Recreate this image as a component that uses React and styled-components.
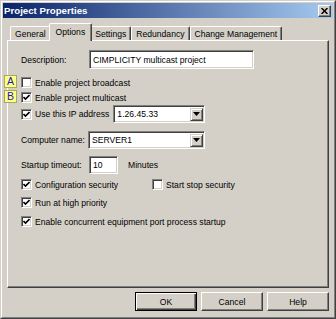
import React from 'react';
import styled, { createGlobalStyle } from 'styled-components';

const Global = createGlobalStyle`
  html, body { margin: 0; padding: 0; background: #D4D0C8; }
  body { font-family: "Liberation Sans", Arial, sans-serif; font-size: 8.6px; color: #000; }
  * { box-sizing: border-box; }
`;

const Window = styled.div`
  width: 336px;
  height: 319px;
  background: #D4D0C8;
  border: 1px solid;
  border-color: #D4D0C8 #404040 #404040 #D4D0C8;
  display: flex;
  flex-direction: column;
`;

const Frame = styled.div`
  flex: 1;
  display: flex;
  flex-direction: column;
  border: 1px solid;
  border-color: #fff #808080 #808080 #fff;
  padding: 1px;
`;

const TitleBar = styled.div`
  height: 15px;
  display: flex;
  align-items: center;
  justify-content: space-between;
  padding: 0 2px 0 1px;
  background: linear-gradient(to right, #0A246A, #A6CAF0);
`;

const Title = styled.span`
  color: #fff;
  font-weight: bold;
  font-size: 9.7px;
`;

const CloseBtn = styled.div`
  width: 13px;
  height: 12px;
  background: #D4D0C8;
  border: 1px solid;
  border-color: #fff #404040 #404040 #fff;
  box-shadow: inset -1px -1px #808080;
  display: flex;
  align-items: center;
  justify-content: center;
`;

const Body = styled.div`
  flex: 1;
  display: flex;
  flex-direction: column;
  padding: 5px 4px 0 4px;
`;

const TabRow = styled.div`
  display: flex;
  align-items: flex-end;
  height: 17px;
  padding-left: 3px;
  position: relative;
  z-index: 2;
`;

const Tab = styled.div`
  height: ${p => (p.$active ? 18 : 14)}px;
  margin: ${p => (p.$active ? '0 -2px -1px -2px' : '0 0 0 0')};
  padding: 0 ${p => (p.$active ? 6 : 4)}px;
  display: flex;
  align-items: center;
  padding-bottom: ${p => (p.$active ? 2 : 0)}px;
  background: #D4D0C8;
  border-top: 1px solid #fff;
  border-left: 1px solid #fff;
  border-right: 1px solid #404040;
  box-shadow: inset -1px 0 #808080;
  border-radius: 2px 2px 0 0;
  position: relative;
  z-index: ${p => (p.$active ? 3 : 1)};
  white-space: nowrap;
`;

const Panel = styled.div`
  height: 248px;
  border: 1px solid;
  border-color: #fff #404040 #404040 #fff;
  box-shadow: inset -1px -1px #808080;
  padding: 9px 0 0 13px;
  display: flex;
  flex-direction: column;
  position: relative;
  z-index: 1;
`;

const Row = styled.div`
  display: flex;
  align-items: center;
  height: ${p => p.$h}px;
  margin-top: ${p => p.$mt || 0}px;
  position: relative;
`;

const Label = styled.span`
  width: ${p => (p.$w ? `${p.$w}px` : 'auto')};
  margin-left: ${p => p.$ml || 0}px;
  white-space: nowrap;
  flex: none;
`;

const Field = styled.div`
  width: ${p => p.$w}px;
  height: 18px;
  background: #fff;
  border: 1px solid;
  border-color: #808080 #fff #fff #808080;
  box-shadow: inset 1px 1px #404040, inset -1px -1px #D4D0C8;
  display: flex;
  align-items: center;
  padding: 0 2px 0 3px;
  margin-left: ${p => p.$ml || 0}px;
  flex: none;
  white-space: nowrap;
  overflow: hidden;
`;

const FieldText = styled.span`
  flex: 1;
`;

const DropBtn = styled.div`
  width: 13px;
  height: 13px;
  margin-right: -1px;
  background: #D4D0C8;
  border: 1px solid;
  border-color: #D4D0C8 #404040 #404040 #D4D0C8;
  box-shadow: inset 1px 1px #fff, inset -1px -1px #808080;
  display: flex;
  align-items: center;
  justify-content: center;
  flex: none;
`;

const Box = styled.div`
  width: 11px;
  height: 11px;
  background: #fff;
  border: 1px solid;
  border-color: #808080 #fff #fff #808080;
  box-shadow: inset 1px 1px #404040, inset -1px -1px #D4D0C8;
  display: flex;
  align-items: center;
  justify-content: center;
  flex: none;
  margin-right: 3px;
`;

const Check = styled.label`
  display: flex;
  align-items: center;
  width: ${p => (p.$w ? `${p.$w}px` : 'auto')};
  white-space: nowrap;
  flex: none;
`;

const Badge = styled.div`
  position: absolute;
  left: -17px;
  top: 0;
  width: 13px;
  height: 13px;
  background: #FFFF80;
  border: 1px solid #A8A860;
  color: #1A1AC8;
  font-size: 10.5px;
  line-height: 11px;
  text-align: center;
`;

const ButtonRow = styled.div`
  display: flex;
  justify-content: flex-end;
  gap: 4px;
  margin-top: 4px;
`;

const Button = styled.div`
  width: 62px;
  height: 19px;
  display: flex;
  align-items: center;
  justify-content: center;
  background: #D4D0C8;
  border: 1px solid;
  border-color: ${p => (p.$default ? '#000' : '#fff #404040 #404040 #fff')};
  box-shadow: ${p =>
    p.$default
      ? 'inset 1px 1px #fff, inset -1px -1px #404040, inset -2px -2px #808080'
      : 'inset -1px -1px #808080'};
`;

const CheckMark = () => (
  <svg width="7" height="7" viewBox="0 0 7 7">
    <path d="M0.5 3 L2.5 5 L6.5 1" stroke="#000" strokeWidth="1.6" fill="none" />
  </svg>
);

const CheckBox = ({ checked, children, w }) => (
  <Check $w={w}>
    <Box>{checked && <CheckMark />}</Box>
    {children}
  </Check>
);

const Arrow = () => (
  <svg width="7" height="4" viewBox="0 0 7 4">
    <path d="M0 0 H7 L3.5 4 Z" fill="#000" />
  </svg>
);

const Combo = ({ w, ml, value }) => (
  <Field $w={w} $ml={ml}>
    <FieldText>{value}</FieldText>
    <DropBtn>
      <Arrow />
    </DropBtn>
  </Field>
);

export default function App() {
  return (
    <>
      <Global />
      <Window>
        <Frame>
          <TitleBar>
            <Title>Project Properties</Title>
            <CloseBtn>
              <svg width="7" height="6" viewBox="0 0 7 6">
                <path d="M0.5 0 L6.5 6 M6.5 0 L0.5 6" stroke="#000" strokeWidth="1.5" />
              </svg>
            </CloseBtn>
          </TitleBar>
          <Body>
            <TabRow>
              <Tab>General</Tab>
              <Tab $active>Options</Tab>
              <Tab>Settings</Tab>
              <Tab>Redundancy</Tab>
              <Tab>Change Management</Tab>
            </TabRow>
            <Panel>
              <Row $h={19}>
                <Label $w={68}>Description:</Label>
                <Field $w={165} style={{ height: 19 }}>
                  <FieldText>CIMPLICITY multicast project</FieldText>
                </Field>
              </Row>
              <Row $h={15} $mt={6}>
                <Badge>A</Badge>
                <CheckBox>Enable project broadcast</CheckBox>
              </Row>
              <Row $h={15}>
                <Badge>B</Badge>
                <CheckBox checked>Enable project multicast</CheckBox>
              </Row>
              <Row $h={18}>
                <CheckBox checked>Use this IP address</CheckBox>
                <Combo w={92} ml={4} value="1.26.45.33" />
              </Row>
              <Row $h={18} $mt={8}>
                <Label $w={67}>Computer name:</Label>
                <Combo w={117} value="SERVER1" />
              </Row>
              <Row $h={18} $mt={7}>
                <Label $w={68}>Startup timeout:</Label>
                <Field $w={29}>
                  <FieldText>10</FieldText>
                </Field>
                <Label $ml={10}>Minutes</Label>
              </Row>
              <Row $h={15} $mt={3}>
                <CheckBox checked w={131}>Configuration security</CheckBox>
                <CheckBox>Start stop security</CheckBox>
              </Row>
              <Row $h={15} $mt={3}>
                <CheckBox checked>Run at high priority</CheckBox>
              </Row>
              <Row $h={15} $mt={4}>
                <CheckBox checked>Enable concurrent equipment port process startup</CheckBox>
              </Row>
            </Panel>
            <ButtonRow>
              <Button $default>OK</Button>
              <Button>Cancel</Button>
              <Button>Help</Button>
            </ButtonRow>
          </Body>
        </Frame>
      </Window>
    </>
  );
}
